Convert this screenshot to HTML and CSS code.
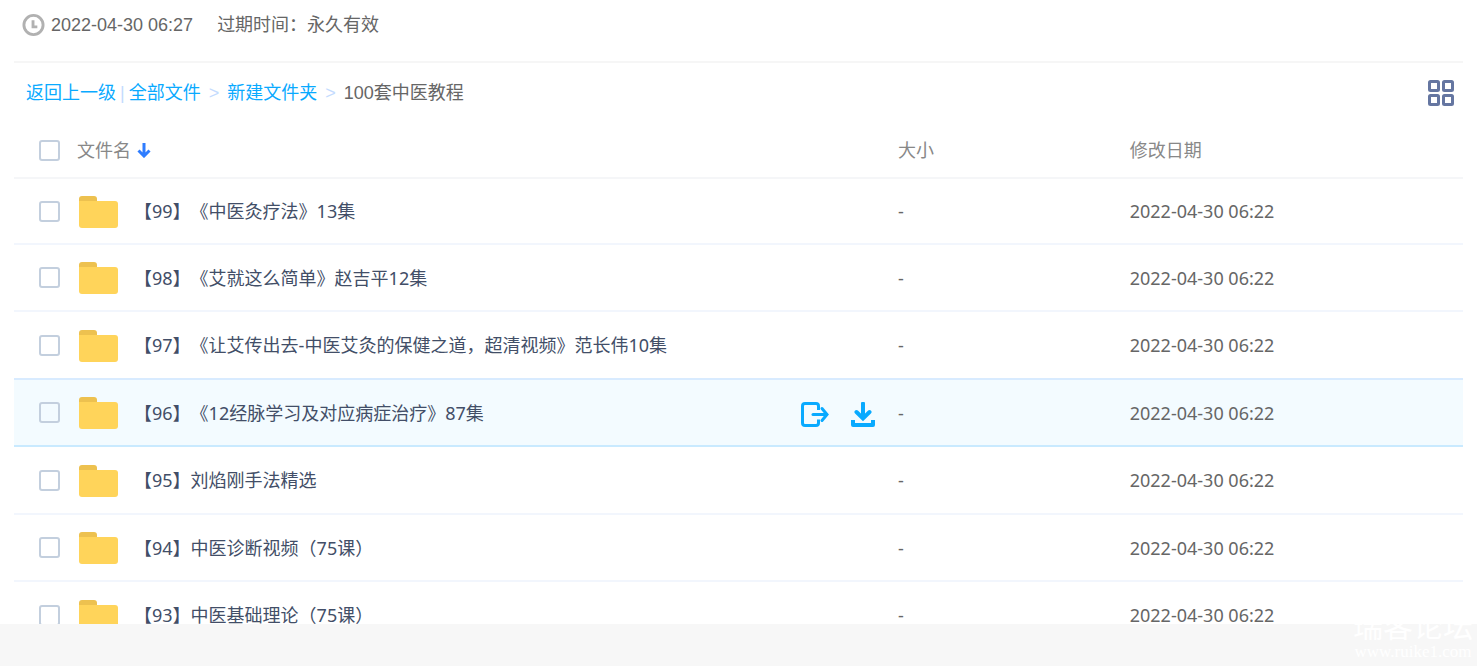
FILE: index.html
```html
<!DOCTYPE html>
<html lang="zh-CN">
<head>
    <meta charset="UTF-8">
    <meta name="viewport" content="width=device-width, initial-scale=1.0">
    <title>100套中医教程</title>
    <link rel="stylesheet" href="styles.css">
</head>
<body>
    <svg class="sprite" aria-hidden="true">
        <symbol id="folder" viewBox="0 0 40 33">
            <path d="M0 6V3Q0 0 3 0H15Q18 0 18 3V8H0Z" fill="#edc14f"/>
            <path d="M0 5H36Q39 5 39 8V29Q39 32 36 32H3Q0 32 0 29Z" fill="#ffd45a"/>
        </symbol>
    </svg>

    <main class="share">
        <header class="info">
            <svg class="clock" width="23" height="24" viewBox="0 0 24 24" fill="none">
                <circle cx="12" cy="12" r="10" stroke="#b1b1b1" stroke-width="3"/>
                <path d="M11.500 7V14H16" stroke="#b1b1b1" stroke-width="3"/>
            </svg>
            <time>2022-04-30 06:27</time>
            <span class="expire">过期时间：永久有效</span>
        </header>

        <div class="bar">
            <nav class="crumbs">
                <a href="#">返回上一级</a>
                <span class="sep">|</span>
                <a href="#">全部文件</a>
                <span class="sep arrow">&gt;</span>
                <a href="#">新建文件夹</a>
                <span class="sep arrow">&gt;</span>
                <span class="current">100套中医教程</span>
            </nav>
            <button class="grid-btn" type="button" aria-label="切换视图">
                <svg width="26" height="26" viewBox="0 0 26 26" fill="none" stroke="#6576a1" stroke-width="3">
                    <rect x="1.5" y="1.5" width="9" height="9" rx="1"/>
                    <rect x="15.5" y="1.5" width="9" height="9" rx="1"/>
                    <rect x="1.5" y="15.5" width="9" height="9" rx="1"/>
                    <rect x="15.5" y="15.5" width="9" height="9" rx="1"/>
                </svg>
            </button>
        </div>

        <table class="files">
            <thead>
                <tr>
                    <th class="col-check"><input type="checkbox" class="check" aria-label="全选"></th>
                    <th class="col-name">
                        <span class="sort">文件名
                            <svg width="14" height="16" viewBox="0 0 14 16" fill="none" stroke="#2f7dff" stroke-width="3">
                                <path d="M7 1V14M1.500 8.500L7 14L12.500 8.500"/>
                            </svg>
                        </span>
                    </th>
                    <th class="col-size">大小</th>
                    <th class="col-date">修改日期</th>
                </tr>
            </thead>
            <tbody>
                <tr>
                    <td class="col-check"><input type="checkbox" class="check" id="f99"></td>
                    <td><div class="name"><svg class="folder"><use href="#folder"/></svg><label for="f99">【99】《中医灸疗法》13集</label></div></td>
                    <td>-</td>
                    <td>2022-04-30 06:22</td>
                </tr>
                <tr>
                    <td class="col-check"><input type="checkbox" class="check" id="f98"></td>
                    <td><div class="name"><svg class="folder"><use href="#folder"/></svg><label for="f98">【98】《艾就这么简单》赵吉平12集</label></div></td>
                    <td>-</td>
                    <td>2022-04-30 06:22</td>
                </tr>
                <tr>
                    <td class="col-check"><input type="checkbox" class="check" id="f97"></td>
                    <td><div class="name"><svg class="folder"><use href="#folder"/></svg><label for="f97">【97】《让艾传出去-中医艾灸的保健之道，超清视频》范长伟10集</label></div></td>
                    <td>-</td>
                    <td>2022-04-30 06:22</td>
                </tr>
                <tr class="active">
                    <td class="col-check"><input type="checkbox" class="check" id="f96"></td>
                    <td>
                        <div class="name">
                            <svg class="folder"><use href="#folder"/></svg><label for="f96">【96】《12经脉学习及对应病症治疗》87集</label>
                            <div class="tools">
                                <button type="button" aria-label="转存">
                                    <svg width="28" height="26" viewBox="0 0 28 26" fill="none" stroke="#09aaff" stroke-width="3">
                                        <path d="M17.500 8V4Q17.500 1.500 15 1.500H4Q1.500 1.500 1.500 4V21Q1.500 23.500 4 23.500H15Q17.500 23.500 17.500 21V17.500"/>
                                        <path d="M12 12.500H25" stroke-linecap="round"/>
                                        <path d="M21 6.500L26 12.500L21 18.500" stroke-linecap="round"/>
                                    </svg>
                                </button>
                                <button type="button" aria-label="下载">
                                    <svg width="24" height="26" viewBox="0 0 24 26" fill="none" stroke="#09aaff" stroke-width="3">
                                        <path d="M12 1.500V16M5.500 10L12 16.500L18.500 10" stroke-width="4" stroke-linecap="round"/>
                                        <path d="M2 18V23H22V18" stroke-width="4" stroke-linejoin="round"/>
                                    </svg>
                                </button>
                            </div>
                        </div>
                    </td>
                    <td>-</td>
                    <td>2022-04-30 06:22</td>
                </tr>
                <tr>
                    <td class="col-check"><input type="checkbox" class="check" id="f95"></td>
                    <td><div class="name"><svg class="folder"><use href="#folder"/></svg><label for="f95">【95】刘焰刚手法精选</label></div></td>
                    <td>-</td>
                    <td>2022-04-30 06:22</td>
                </tr>
                <tr>
                    <td class="col-check"><input type="checkbox" class="check" id="f94"></td>
                    <td><div class="name"><svg class="folder"><use href="#folder"/></svg><label for="f94">【94】中医诊断视频（75课）</label></div></td>
                    <td>-</td>
                    <td>2022-04-30 06:22</td>
                </tr>
                <tr>
                    <td class="col-check"><input type="checkbox" class="check" id="f93"></td>
                    <td><div class="name"><svg class="folder"><use href="#folder"/></svg><label for="f93">【93】中医基础理论（75课）</label></div></td>
                    <td>-</td>
                    <td>2022-04-30 06:22</td>
                </tr>
            </tbody>
        </table>
    </main>

    <footer class="foot"></footer>
    <div class="mark">
        <div class="mark-name">瑞客论坛</div>
        <div class="mark-url">www.ruike1.com</div>
    </div>
</body>
</html>
```
FILE: styles.css
```css
* {
    margin: 0;
    padding: 0;
    box-sizing: border-box;
}

body {
    position: relative;
    display: flex;
    flex-direction: column;
    height: 100vh;
    overflow: hidden;
    background-color: #f7f7f7;
    color: #666;
    font: 18px/24px "Liberation Sans", "Noto Sans CJK SC", sans-serif;
    text-spacing-trim: space-all;
}
a {
    color: #09aaff;
    text-decoration: none;
}
button {
    border: 0;
    background: none;
    cursor: pointer;
}
svg {
    display: block;
}
.sprite {
    position: absolute;
    width: 0;
    height: 0;
}

.share {
    flex: 1;
    min-height: 0;
    padding: 0 14px;
    background-color: #fff;
    overflow: hidden;
}
.info {
    display: flex;
    align-items: center;
    height: 63px;
    padding: 0 8px 12px;
    border-bottom: 2px solid #f6f6f6;
}
.info time {
    margin-left: 6px;
}
.expire {
    margin-left: 24px;
}

.bar {
    display: flex;
    align-items: center;
    justify-content: space-between;
    height: 60px;
    padding: 0 9px 0 12px;
}
.crumbs {
    display: flex;
    gap: 4px;
}
.sep {
    color: #c4dbfe;
}
.arrow {
    margin: 0 4px;
}
.grid-btn {
    width: 26px;
    height: 26px;
}

.files {
    width: 100%;
    border-collapse: separate;
    border-spacing: 0;
    table-layout: fixed;
    font-family: "Noto Sans", "Noto Sans CJK SC", sans-serif;
}
.files th {
    height: 56px;
    border-bottom: 2px solid #f5f6f8;
    color: #888;
    font-weight: normal;
    text-align: left;
}
.files td {
    height: 68px;
    border-bottom: 2px solid #f2f6fd;
}
.files tr:nth-child(even) td {
    height: 67px;
}
.files tbody tr:first-child td {
    height: 66px;
}
.files .active td {
    border-bottom-color: #c9eaff;
    background-color: #f3fbff;
    box-shadow: 0 -2px #d8ebff;
}
.col-check {
    width: 63px;
    padding-left: 25px;
}
.col-size {
    width: 16%;
}
.col-date {
    width: 23%;
}
.check {
    display: block;
    width: 21px;
    height: 21px;
    border: 2px solid #c3cfde;
    border-radius: 3px;
    appearance: none;
}
.sort {
    display: flex;
    align-items: center;
    gap: 6px;
}
.name {
    display: flex;
    align-items: center;
    color: #424e67;
}
.folder {
    width: 40px;
    height: 33px;
    margin: 2px 15px 0 2px;
}
.tools {
    display: flex;
    gap: 22px;
    margin-left: auto;
    padding: 5px 23px 0 0;
}

.foot {
    height: 42px;
}
.mark {
    position: absolute;
    right: 4px;
    bottom: 4px;
    color: #fff;
    text-align: center;
}
.mark-name {
    font-size: 30px;
    line-height: 30px;
}
.mark-url {
    font: 17px/20px "Liberation Serif", serif;
}
```
